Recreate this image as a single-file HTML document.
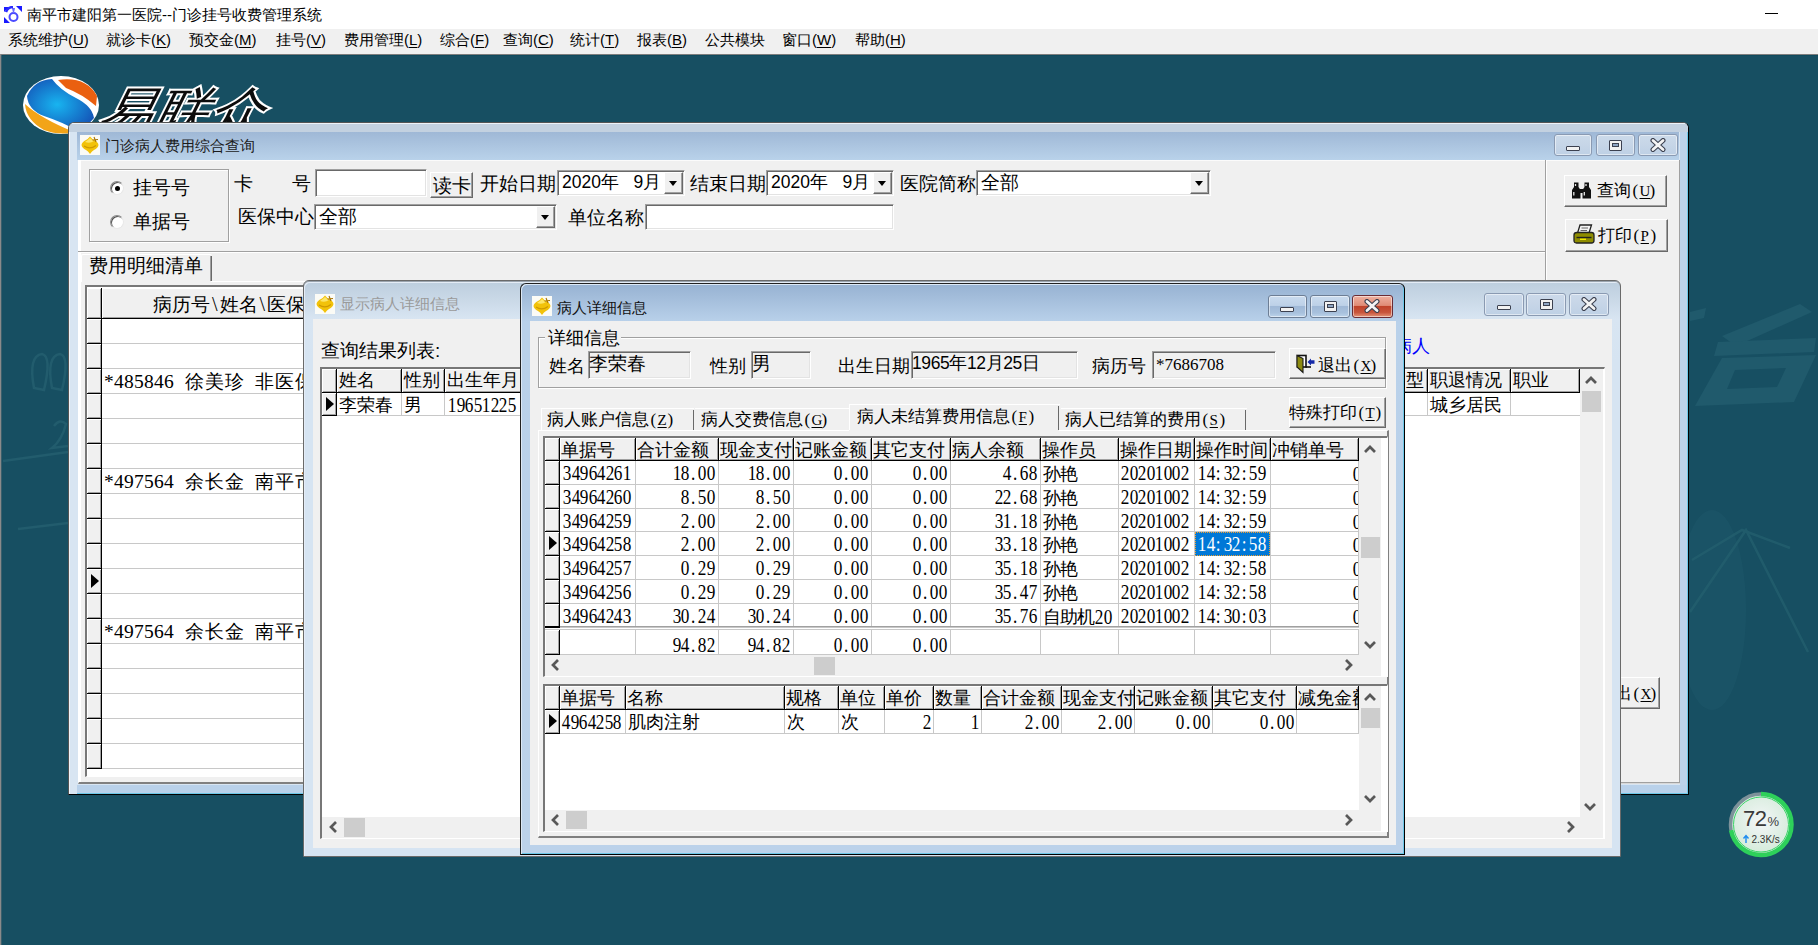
<!DOCTYPE html><html><head><meta charset="utf-8"><style>
*{margin:0;padding:0}
html,body{width:1818px;height:945px;overflow:hidden;background:#fff;position:relative}
div{position:absolute;box-sizing:border-box}
.t{white-space:nowrap;line-height:1;font-family:'Liberation Sans',sans-serif}
u{text-decoration:underline;text-underline-offset:2px;text-decoration-thickness:1px}
.m i{display:inline-block;font-style:normal;text-align:center}
.h{display:inline-block;font-style:normal;text-align:center;font-family:'Liberation Serif',serif}
.ga{font-family:'Liberation Serif',serif;font-size:20.5px}
.ga i{width:8.5px;transform:scaleX(.84)}
.ga i.w{width:17px;font-size:17.5px;transform:none;position:relative;top:-1px}
.g1{font-family:'Liberation Serif',serif;font-size:18.6px}
.g1 i{width:10px;transform:scaleX(1.05)}
.g1 i.w{width:20px;font-size:19px;transform:none}
</style></head><body><div style="left:0px;top:0px;width:1818px;height:29px;background:#fff"></div>
<svg style="position:absolute;left:4px;top:6px" width="18" height="17" viewBox="0 0 18 17"><rect width="18" height="17" fill="#fff"/><path d="M0 1 L5 1 L0 6 Z M18 0 L18 6 L12 0 Z M0 17 L6 17 L0 11 Z" fill="#1a1aff"/><circle cx="9.5" cy="11" r="4" fill="none" stroke="#4a4aff" stroke-width="2"/><path d="M8 2 L11 2 L10 7 L9 7 Z" fill="#6a6aff"/><path d="M2 6 Q4 1 9 1" stroke="#2a2aff" stroke-width="2.5" fill="none"/></svg>
<div class="t" style="left:27px;top:7px;font-size:15px;">南平市建阳第一医院--门诊挂号收费管理系统</div>
<div style="left:1765px;top:13px;width:13px;height:1px;background:#000"></div>
<div style="left:0px;top:29px;width:1818px;height:25px;background:#f0f0f0"></div>
<div class="t" style="left:8px;top:32px;font-size:15px;">系统维护(<u>U</u>)</div>
<div class="t" style="left:106px;top:32px;font-size:15px;">就诊卡(<u>K</u>)</div>
<div class="t" style="left:189px;top:32px;font-size:15px;">预交金(<u>M</u>)</div>
<div class="t" style="left:276px;top:32px;font-size:15px;">挂号(<u>V</u>)</div>
<div class="t" style="left:344px;top:32px;font-size:15px;">费用管理(<u>L</u>)</div>
<div class="t" style="left:440px;top:32px;font-size:15px;">综合(<u>F</u>)</div>
<div class="t" style="left:503px;top:32px;font-size:15px;">查询(<u>C</u>)</div>
<div class="t" style="left:570px;top:32px;font-size:15px;">统计(<u>T</u>)</div>
<div class="t" style="left:637px;top:32px;font-size:15px;">报表(<u>B</u>)</div>
<div class="t" style="left:705px;top:32px;font-size:15px;">公共模块</div>
<div class="t" style="left:782px;top:32px;font-size:15px;">窗口(<u>W</u>)</div>
<div class="t" style="left:855px;top:32px;font-size:15px;">帮助(<u>H</u>)</div>
<div style="left:0px;top:54px;width:1818px;height:891px;background:#174f62"></div>
<div style="left:0px;top:54px;width:1818px;height:1px;background:#7d7d7d"></div>
<div style="left:0px;top:55px;width:1818px;height:1px;background:#0f4a5d"></div>
<div style="left:0px;top:54px;width:1px;height:891px;background:#8a8a8a"></div>
<div style="left:1px;top:55px;width:1px;height:890px;background:#3a5f6c"></div>
<svg style="position:absolute;left:0;top:0" width="1818" height="945" viewBox="0 0 1818 945"><g fill="#205a6c"><path d="M1722 336 L1800 304 L1812 312 L1736 346 Z"/><path d="M1718 342 L1816 338 L1814 352 L1714 356 Z"/><path fill-rule="evenodd" d="M1722 358 L1816 355 L1794 402 L1695 406 Z M1735 370 L1786 368 L1777 387 L1727 389 Z"/><path d="M1690 312 L1706 308 L1704 318 L1690 321 Z"/></g><ellipse cx="1712" cy="610" rx="34" ry="100" fill="#1c5568" opacity=".7"/><g fill="none" stroke="#24606f" stroke-width="2.5" opacity=".75"><path d="M1690 612 L1746 530 L1808 652"/><path d="M1692 560 L1742 530 L1790 548"/></g><g fill="none" stroke="#225c6d" stroke-width="2.5"><path d="M3 461 L68 452 M18 529 L68 523"/><path d="M34 388 Q28 356 42 354 Q52 356 44 390 Z M52 388 Q46 356 60 354 Q70 356 62 390 Z"/><path d="M54 426 Q60 418 66 424 Q62 440 52 448 L68 446"/></g></svg>
<svg style="position:absolute;left:20px;top:74px" width="262" height="62" viewBox="0 0 262 62"><defs><radialGradient id="lg" cx="0.45" cy="0.5" r="0.6"><stop offset="0" stop-color="#18b4f0"/><stop offset="1" stop-color="#1456b8"/></radialGradient></defs><ellipse cx="41" cy="31" rx="38" ry="29" fill="#fff"/><path d="M7 22 Q14 6 32 5 Q40 16 56 24 Q72 32 74 44 Q66 54 56 56 Q42 48 24 42 Q8 36 7 22 Z" fill="url(#lg)"/><path d="M38 6 Q66 2 77 22 L76 32 Q62 20 46 14 Z" fill="#ea6010"/><path d="M5 30 Q20 44 54 58 Q40 62 24 56 Q6 46 5 30 Z" fill="#f2a418"/><g font-family="Liberation Sans,sans-serif" font-size="54" font-weight="500" font-style="italic"><text x="89" y="57" fill="#0c0c0c" stroke="#fff" stroke-width="4" paint-order="stroke" transform="skewX(-14)" letter-spacing="2" textLength="166">易联众</text></g></svg>
<div style="left:68px;top:122px;width:1621px;height:673px;background:#d8e5f2;border-radius:6px 6px 0 0;border:1px solid #555;border-right-color:#000;border-bottom-color:#000;box-shadow:inset 1px 1px 0 #eef4fb"></div>
<div style="left:69px;top:123px;width:1619px;height:9px;background:linear-gradient(#eef3f8 0,#eef3f8 1px,#c3d1e0 1px,#c3d1e0 100%);border-radius:5px 5px 0 0"></div>
<div style="left:77px;top:132px;width:1602px;height:28px;background:linear-gradient(#9fb8d6,#b9d2ea)"></div>
<div style="left:1680px;top:132px;width:8px;height:662px;background:#bcd2ea"></div>
<div style="left:77px;top:785px;width:1611px;height:9px;background:#b9d1ea"></div>
<div style="left:1687px;top:132px;width:1px;height:662px;background:#6cc8e8"></div>
<div style="left:77px;top:793px;width:1611px;height:1px;background:#6cc8e8"></div>
<svg style="position:absolute;left:80px;top:135px" width="20" height="20" viewBox="0 0 20 20"><rect width="20" height="20" fill="#fbfbf6"/><path d="M10 1.5 Q12 4 14 5 Q18 7 18.5 10 Q18 13 14 15 Q12 16 10 19 Q8 16 6 15 Q2 13 1.5 10 Q2 7 6 5 Q8 4 10 1.5 Z" fill="#f2c20a"/><path d="M10 3 Q12 5 14 6 Q10 9 5 7 Q8 5 10 3 Z" fill="#fde66a"/><path d="M4 11 Q10 15 16 10.5" stroke="#d09a00" stroke-width="1.3" fill="none"/><path d="M14 2 L16 7 M12.5 5 L18 4.5" stroke="#a87400" stroke-width="1.1"/></svg>
<div class="t" style="left:105px;top:138px;font-size:15px;color:#1b1b1b;">门诊病人费用综合查询</div>
<div style="left:1554px;top:134px;width:38px;height:22px;background:linear-gradient(#ccdaea 0%,#c6d5e7 50%,#bed0e5 100%);border:1px solid #8a9ab2;border-radius:3px;box-shadow:inset 0 0 0 1px rgba(255,255,255,.5)"></div>
<div style="left:1566px;top:146px;width:14px;height:5px;background:#f2f2f2;border:1px solid #3c4150;border-radius:1px"></div>
<div style="left:1596px;top:134px;width:39px;height:22px;background:linear-gradient(#ccdaea 0%,#c6d5e7 50%,#bed0e5 100%);border:1px solid #8a9ab2;border-radius:3px;box-shadow:inset 0 0 0 1px rgba(255,255,255,.5)"></div>
<div style="left:1609px;top:140px;width:13px;height:11px;background:#f2f2f2;border:1px solid #3c4150;border-radius:1px"></div>
<div style="left:1612px;top:143px;width:7px;height:4px;background:#8fa6c4;border:1px solid #3c4150"></div>
<div style="left:1638px;top:134px;width:40px;height:22px;background:linear-gradient(#ccdaea 0%,#c6d5e7 50%,#bed0e5 100%);border:1px solid #8a9ab2;border-radius:3px;box-shadow:inset 0 0 0 1px rgba(255,255,255,.5)"></div>
<svg style="position:absolute;left:1650px;top:138px" width="16" height="14" viewBox="0 0 16 14"><path d="M3 2.5 L13 11.5 M13 2.5 L3 11.5" stroke="#3c4150" stroke-width="5" stroke-linecap="round"/><path d="M3 2.5 L13 11.5 M13 2.5 L3 11.5" stroke="#f4f4f4" stroke-width="2.8" stroke-linecap="round"/></svg>
<div style="left:78px;top:160px;width:1602px;height:624px;background:#f0f0f0"></div>
<div style="left:78px;top:160px;width:1602px;height:1px;background:#fbfbfb"></div>
<div style="left:1679px;top:160px;width:1px;height:624px;background:#a0a0a0"></div>
<div style="left:78px;top:782px;width:1602px;height:1px;background:#a0a0a0"></div>
<div style="left:78px;top:783px;width:1602px;height:1px;background:#d8d8d8"></div>
<div style="left:78px;top:160px;width:1px;height:624px;background:#fff"></div>
<div style="left:79px;top:160px;width:1px;height:624px;background:#fff"></div>
<div style="left:80px;top:160px;width:1px;height:624px;background:#fff"></div>
<div style="left:89px;top:169px;width:140px;height:73px;border:1px solid #a0a0a0;box-shadow:1px 1px 0 #fff,inset 1px 1px 0 #fff"></div>
<div style="left:110px;top:181px;width:14px;height:14px;border-radius:50%;background:#fff;border:1px solid;border-color:#8a8a8a #e8e8e8 #e8e8e8 #8a8a8a;box-shadow:inset 1px 1px 0 #505050"></div>
<div style="left:115px;top:186px;width:5px;height:5px;border-radius:50%;background:#000"></div>
<div class="t" style="left:133px;top:178px;font-size:19px;">挂号号</div>
<div style="left:110px;top:215px;width:14px;height:14px;border-radius:50%;background:#fff;border:1px solid;border-color:#8a8a8a #e8e8e8 #e8e8e8 #8a8a8a;box-shadow:inset 1px 1px 0 #505050"></div>
<div class="t" style="left:133px;top:212px;font-size:19px;">单据号</div>
<div class="t" style="left:234px;top:174px;font-size:19px;">卡</div>
<div class="t" style="left:292px;top:174px;font-size:19px;">号</div>
<div class="t" style="left:238px;top:208px;font-size:18.5px;">医保中心</div>
<div style="left:315px;top:169px;width:112px;height:28px;background:#fff;border:1px solid;border-color:#a0a0a0 #fff #fff #a0a0a0;box-shadow:inset 1px 1px 0 #696969,inset -1px -1px 0 #e3e3e3"></div>
<div style="left:430px;top:172px;width:43px;height:26px;background:#f0f0f0;border:1px solid;border-color:#fff #696969 #696969 #fff;box-shadow:inset -1px -1px 0 #a0a0a0"></div>
<div class="t" style="left:433px;top:176px;font-size:19px;">读卡</div>
<div class="t" style="left:480px;top:175px;font-size:18.5px;">开始日期</div>
<div style="left:557px;top:170px;width:128px;height:26px;background:#fff;border:1px solid;border-color:#a0a0a0 #fff #fff #a0a0a0;box-shadow:inset 1px 1px 0 #696969,inset -1px -1px 0 #e3e3e3"></div>
<div style="left:664px;top:172px;width:19px;height:22px;background:#f0f0f0;border:1px solid;border-color:#fff #696969 #696969 #fff;box-shadow:inset -1px -1px 0 #a0a0a0"></div>
<div style="left:669px;top:181px;width:0;height:0;border-left:4px solid transparent;border-right:4px solid transparent;border-top:5px solid #000"></div>
<div class="t" style="left:562px;top:174px;font-size:17.5px;">2020年&nbsp;&nbsp;&nbsp;9月</div>
<div class="t" style="left:690px;top:175px;font-size:18.5px;">结束日期</div>
<div style="left:766px;top:170px;width:128px;height:26px;background:#fff;border:1px solid;border-color:#a0a0a0 #fff #fff #a0a0a0;box-shadow:inset 1px 1px 0 #696969,inset -1px -1px 0 #e3e3e3"></div>
<div style="left:873px;top:172px;width:19px;height:22px;background:#f0f0f0;border:1px solid;border-color:#fff #696969 #696969 #fff;box-shadow:inset -1px -1px 0 #a0a0a0"></div>
<div style="left:878px;top:181px;width:0;height:0;border-left:4px solid transparent;border-right:4px solid transparent;border-top:5px solid #000"></div>
<div style="left:768px;top:172px;width:101px;height:22px;overflow:hidden"><div class="t" style="left:3px;top:2px;font-size:17.5px">2020年&nbsp;&nbsp;&nbsp;9月1日</div></div>
<div class="t" style="left:900px;top:175px;font-size:18.5px;">医院简称</div>
<div style="left:976px;top:170px;width:235px;height:26px;background:#fff;border:1px solid;border-color:#a0a0a0 #fff #fff #a0a0a0;box-shadow:inset 1px 1px 0 #696969,inset -1px -1px 0 #e3e3e3"></div>
<div style="left:1190px;top:172px;width:19px;height:22px;background:#f0f0f0;border:1px solid;border-color:#fff #696969 #696969 #fff;box-shadow:inset -1px -1px 0 #a0a0a0"></div>
<div style="left:1195px;top:181px;width:0;height:0;border-left:4px solid transparent;border-right:4px solid transparent;border-top:5px solid #000"></div>
<div class="t" style="left:981px;top:173px;font-size:19px;">全部</div>
<div style="left:314px;top:204px;width:243px;height:26px;background:#fff;border:1px solid;border-color:#a0a0a0 #fff #fff #a0a0a0;box-shadow:inset 1px 1px 0 #696969,inset -1px -1px 0 #e3e3e3"></div>
<div style="left:536px;top:206px;width:19px;height:22px;background:#f0f0f0;border:1px solid;border-color:#fff #696969 #696969 #fff;box-shadow:inset -1px -1px 0 #a0a0a0"></div>
<div style="left:541px;top:215px;width:0;height:0;border-left:4px solid transparent;border-right:4px solid transparent;border-top:5px solid #000"></div>
<div class="t" style="left:319px;top:207px;font-size:19px;">全部</div>
<div class="t" style="left:568px;top:209px;font-size:18.5px;">单位名称</div>
<div style="left:645px;top:204px;width:249px;height:26px;background:#fff;border:1px solid;border-color:#a0a0a0 #fff #fff #a0a0a0;box-shadow:inset 1px 1px 0 #696969,inset -1px -1px 0 #e3e3e3"></div>
<div style="left:78px;top:251px;width:1467px;height:1px;background:#a0a0a0"></div>
<div style="left:78px;top:252px;width:1467px;height:1px;background:#fff"></div>
<div style="left:1545px;top:160px;width:1px;height:624px;background:#a0a0a0"></div>
<div style="left:1546px;top:160px;width:1px;height:624px;background:#fff"></div>
<div style="left:1564px;top:175px;width:103px;height:32px;background:#f0f0f0;border:1px solid;border-color:#fff #696969 #696969 #fff;box-shadow:inset -1px -1px 0 #a0a0a0"></div>
<svg style="position:absolute;left:1572px;top:182px" width="20" height="17" viewBox="0 0 20 17"><path d="M2 0.5 L6.5 0.5 L6.5 5 L8.5 8 L8.5 16.5 L0 16.5 L0 8 L2 5 Z M12.5 0.5 L17 0.5 L17 5 L19 8 L19 16.5 L10.5 16.5 L10.5 8 L12.5 5 Z M8 7 L11 7 L11 11 L8 11 Z" fill="#111"/><path d="M1.8 10 L1.8 13.5 M12.3 10 L12.3 13.5 M3.5 2 L3.5 4 M14 2 L14 4" stroke="#e8e8e8" stroke-width="1.3"/></svg>
<div class="t" style="left:1597px;top:182px;font-size:17px;">查询<i class="h" style="width:8.5px">(</i><i class="h" style="width:8.5px"><u style="font-size:15px">U</u></i><i class="h" style="width:8.5px">)</i></div>
<div style="left:1565px;top:219px;width:103px;height:33px;background:#f0f0f0;border:1px solid;border-color:#fff #696969 #696969 #fff;box-shadow:inset -1px -1px 0 #a0a0a0"></div>
<svg style="position:absolute;left:1573px;top:224px" width="22" height="20" viewBox="0 0 22 20"><path d="M7 1 L18.5 1 L16 9 L4.5 9 Z" fill="#f4f4f4" stroke="#222" stroke-width="1.3"/><path d="M8.5 4 L15 4 M7.5 6.5 L14 6.5" stroke="#555" stroke-width="0.9"/><path d="M1 11 Q1 8.5 4 8.5 L18.5 8.5 Q21 8.5 21 11 L21 16.5 Q21 19 18.5 19 L3.5 19 Q1 19 1 16.5 Z" fill="#8e8c00" stroke="#222" stroke-width="1.3"/><path d="M3.5 13.5 L18.5 13.5" stroke="#222" stroke-width="1.4"/><path d="M7 15.3 L13 15.3" stroke="#f2ea00" stroke-width="1.4"/></svg>
<div class="t" style="left:1598px;top:227px;font-size:17px;">打印<i class="h" style="width:8.5px">(</i><i class="h" style="width:8.5px"><u style="font-size:15px">P</u></i><i class="h" style="width:8.5px">)</i></div>
<div style="left:1557px;top:677px;width:103px;height:32px;background:#f0f0f0;border:1px solid;border-color:#fff #696969 #696969 #fff;box-shadow:inset -1px -1px 0 #a0a0a0"></div>
<div class="t" style="left:1598px;top:685px;font-size:17px;">退出<i class="h" style="width:8.5px">(</i><i class="h" style="width:8.5px"><u style="font-size:15px">X</u></i><i class="h" style="width:8.5px">)</i></div>
<div style="left:81px;top:254px;width:131px;height:28px;background:#f0f0f0;border-left:1px solid #fff;border-top:1px solid #fff;border-radius:2px 2px 0 0"></div>
<div style="left:211px;top:256px;width:1px;height:26px;background:#696969"></div>
<div style="left:210px;top:256px;width:1px;height:26px;background:#a0a0a0"></div>
<div class="t" style="left:89px;top:256px;font-size:19px;">费用明细清单</div>
<div style="left:78px;top:281px;width:1470px;height:503px;border-left:1px solid #fff;border-top:1px solid #fff;border-bottom:2px solid #808080"></div>
<div style="left:82px;top:281px;width:129px;height:1px;background:#f0f0f0"></div>
<div style="left:85px;top:285px;width:1470px;height:492px;background:#fff;border-left:2px solid #777;border-top:2px solid #777;border-bottom:1px solid #fff"></div>
<div style="left:87px;top:288px;width:14px;height:30px;background:#f0f0f0;box-shadow:inset 1px 1px 0 #fff,inset -1px -1px 0 #a0a0a0"></div>
<div style="left:101px;top:288px;width:1px;height:31px;background:#000"></div>
<div style="left:87px;top:318px;width:15px;height:1px;background:#000"></div>
<div style="left:102px;top:288px;width:1358px;height:30px;background:#f0f0f0;box-shadow:inset 1px 1px 0 #fff,inset -1px -1px 0 #a0a0a0"></div>
<div style="left:1460px;top:288px;width:1px;height:31px;background:#000"></div>
<div style="left:102px;top:318px;width:1359px;height:1px;background:#000"></div>
<div class="t" style="left:153px;top:294px;font-size:19px">病历号<i class="h" style="width:9.5px;font-size:20px">\</i>姓名<i class="h" style="width:9.5px;font-size:20px">\</i>医保</div>
<div style="left:87px;top:319px;width:14px;height:24px;background:#f0f0f0;box-shadow:inset 1px 1px 0 #fff,inset -1px -1px 0 #a0a0a0"></div>
<div style="left:101px;top:319px;width:1px;height:25px;background:#000"></div>
<div style="left:87px;top:343px;width:15px;height:1px;background:#000"></div>
<div style="left:102px;top:343px;width:1400px;height:1px;background:#c8c8c8"></div>
<div style="left:87px;top:344px;width:14px;height:24px;background:#f0f0f0;box-shadow:inset 1px 1px 0 #fff,inset -1px -1px 0 #a0a0a0"></div>
<div style="left:101px;top:344px;width:1px;height:25px;background:#000"></div>
<div style="left:87px;top:368px;width:15px;height:1px;background:#000"></div>
<div style="left:102px;top:368px;width:1400px;height:1px;background:#c8c8c8"></div>
<div style="left:87px;top:369px;width:14px;height:24px;background:#f0f0f0;box-shadow:inset 1px 1px 0 #fff,inset -1px -1px 0 #a0a0a0"></div>
<div style="left:101px;top:369px;width:1px;height:25px;background:#000"></div>
<div style="left:87px;top:393px;width:15px;height:1px;background:#000"></div>
<div style="left:102px;top:393px;width:1400px;height:1px;background:#c8c8c8"></div>
<div style="left:87px;top:394px;width:14px;height:24px;background:#f0f0f0;box-shadow:inset 1px 1px 0 #fff,inset -1px -1px 0 #a0a0a0"></div>
<div style="left:101px;top:394px;width:1px;height:25px;background:#000"></div>
<div style="left:87px;top:418px;width:15px;height:1px;background:#000"></div>
<div style="left:102px;top:418px;width:1400px;height:1px;background:#c8c8c8"></div>
<div style="left:87px;top:419px;width:14px;height:24px;background:#f0f0f0;box-shadow:inset 1px 1px 0 #fff,inset -1px -1px 0 #a0a0a0"></div>
<div style="left:101px;top:419px;width:1px;height:25px;background:#000"></div>
<div style="left:87px;top:443px;width:15px;height:1px;background:#000"></div>
<div style="left:102px;top:443px;width:1400px;height:1px;background:#c8c8c8"></div>
<div style="left:87px;top:444px;width:14px;height:24px;background:#f0f0f0;box-shadow:inset 1px 1px 0 #fff,inset -1px -1px 0 #a0a0a0"></div>
<div style="left:101px;top:444px;width:1px;height:25px;background:#000"></div>
<div style="left:87px;top:468px;width:15px;height:1px;background:#000"></div>
<div style="left:102px;top:468px;width:1400px;height:1px;background:#c8c8c8"></div>
<div style="left:87px;top:469px;width:14px;height:24px;background:#f0f0f0;box-shadow:inset 1px 1px 0 #fff,inset -1px -1px 0 #a0a0a0"></div>
<div style="left:101px;top:469px;width:1px;height:25px;background:#000"></div>
<div style="left:87px;top:493px;width:15px;height:1px;background:#000"></div>
<div style="left:102px;top:493px;width:1400px;height:1px;background:#c8c8c8"></div>
<div style="left:87px;top:494px;width:14px;height:24px;background:#f0f0f0;box-shadow:inset 1px 1px 0 #fff,inset -1px -1px 0 #a0a0a0"></div>
<div style="left:101px;top:494px;width:1px;height:25px;background:#000"></div>
<div style="left:87px;top:518px;width:15px;height:1px;background:#000"></div>
<div style="left:102px;top:518px;width:1400px;height:1px;background:#c8c8c8"></div>
<div style="left:87px;top:519px;width:14px;height:24px;background:#f0f0f0;box-shadow:inset 1px 1px 0 #fff,inset -1px -1px 0 #a0a0a0"></div>
<div style="left:101px;top:519px;width:1px;height:25px;background:#000"></div>
<div style="left:87px;top:543px;width:15px;height:1px;background:#000"></div>
<div style="left:102px;top:543px;width:1400px;height:1px;background:#c8c8c8"></div>
<div style="left:87px;top:544px;width:14px;height:24px;background:#f0f0f0;box-shadow:inset 1px 1px 0 #fff,inset -1px -1px 0 #a0a0a0"></div>
<div style="left:101px;top:544px;width:1px;height:25px;background:#000"></div>
<div style="left:87px;top:568px;width:15px;height:1px;background:#000"></div>
<div style="left:102px;top:568px;width:1400px;height:1px;background:#c8c8c8"></div>
<div style="left:87px;top:569px;width:14px;height:24px;background:#f0f0f0;box-shadow:inset 1px 1px 0 #fff,inset -1px -1px 0 #a0a0a0"></div>
<div style="left:101px;top:569px;width:1px;height:25px;background:#000"></div>
<div style="left:87px;top:593px;width:15px;height:1px;background:#000"></div>
<div style="left:91px;top:574px;width:0;height:0;border-top:7px solid transparent;border-bottom:7px solid transparent;border-left:8px solid #000"></div>
<div style="left:102px;top:593px;width:1400px;height:1px;background:#c8c8c8"></div>
<div style="left:87px;top:594px;width:14px;height:24px;background:#f0f0f0;box-shadow:inset 1px 1px 0 #fff,inset -1px -1px 0 #a0a0a0"></div>
<div style="left:101px;top:594px;width:1px;height:25px;background:#000"></div>
<div style="left:87px;top:618px;width:15px;height:1px;background:#000"></div>
<div style="left:102px;top:618px;width:1400px;height:1px;background:#c8c8c8"></div>
<div style="left:87px;top:619px;width:14px;height:24px;background:#f0f0f0;box-shadow:inset 1px 1px 0 #fff,inset -1px -1px 0 #a0a0a0"></div>
<div style="left:101px;top:619px;width:1px;height:25px;background:#000"></div>
<div style="left:87px;top:643px;width:15px;height:1px;background:#000"></div>
<div style="left:102px;top:643px;width:1400px;height:1px;background:#c8c8c8"></div>
<div style="left:87px;top:644px;width:14px;height:24px;background:#f0f0f0;box-shadow:inset 1px 1px 0 #fff,inset -1px -1px 0 #a0a0a0"></div>
<div style="left:101px;top:644px;width:1px;height:25px;background:#000"></div>
<div style="left:87px;top:668px;width:15px;height:1px;background:#000"></div>
<div style="left:102px;top:668px;width:1400px;height:1px;background:#c8c8c8"></div>
<div style="left:87px;top:669px;width:14px;height:24px;background:#f0f0f0;box-shadow:inset 1px 1px 0 #fff,inset -1px -1px 0 #a0a0a0"></div>
<div style="left:101px;top:669px;width:1px;height:25px;background:#000"></div>
<div style="left:87px;top:693px;width:15px;height:1px;background:#000"></div>
<div style="left:102px;top:693px;width:1400px;height:1px;background:#c8c8c8"></div>
<div style="left:87px;top:694px;width:14px;height:24px;background:#f0f0f0;box-shadow:inset 1px 1px 0 #fff,inset -1px -1px 0 #a0a0a0"></div>
<div style="left:101px;top:694px;width:1px;height:25px;background:#000"></div>
<div style="left:87px;top:718px;width:15px;height:1px;background:#000"></div>
<div style="left:102px;top:718px;width:1400px;height:1px;background:#c8c8c8"></div>
<div style="left:87px;top:719px;width:14px;height:24px;background:#f0f0f0;box-shadow:inset 1px 1px 0 #fff,inset -1px -1px 0 #a0a0a0"></div>
<div style="left:101px;top:719px;width:1px;height:25px;background:#000"></div>
<div style="left:87px;top:743px;width:15px;height:1px;background:#000"></div>
<div style="left:102px;top:743px;width:1400px;height:1px;background:#c8c8c8"></div>
<div style="left:87px;top:744px;width:14px;height:24px;background:#f0f0f0;box-shadow:inset 1px 1px 0 #fff,inset -1px -1px 0 #a0a0a0"></div>
<div style="left:101px;top:744px;width:1px;height:25px;background:#000"></div>
<div style="left:87px;top:768px;width:15px;height:1px;background:#000"></div>
<div style="left:102px;top:768px;width:1400px;height:1px;background:#c8c8c8"></div>
<div class="t m g1" style="left:104px;top:372px;"><i>*</i><i>4</i><i>8</i><i>5</i><i>8</i><i>4</i><i>6</i><i>&nbsp;</i><i class="w">徐</i><i class="w">美</i><i class="w">珍</i><i>&nbsp;</i><i class="w">非</i><i class="w">医</i><i class="w">保</i></div>
<div class="t m g1" style="left:104px;top:472px;"><i>*</i><i>4</i><i>9</i><i>7</i><i>5</i><i>6</i><i>4</i><i>&nbsp;</i><i class="w">余</i><i class="w">长</i><i class="w">金</i><i>&nbsp;</i><i class="w">南</i><i class="w">平</i><i class="w">市</i></div>
<div class="t m g1" style="left:104px;top:622px;"><i>*</i><i>4</i><i>9</i><i>7</i><i>5</i><i>6</i><i>4</i><i>&nbsp;</i><i class="w">余</i><i class="w">长</i><i class="w">金</i><i>&nbsp;</i><i class="w">南</i><i class="w">平</i><i class="w">市</i></div>
<div style="left:303px;top:280px;width:1318px;height:577px;background:linear-gradient(#bccddd 0,#d8e5f2 38px,#d6e4f2 80px,#d6e4f2 100%);border-radius:6px 6px 0 0;border:1px solid #6a6a6a;box-shadow:inset 0 1px 0 #9aa4ae,inset 1px 2px 0 #e4ecf6"></div>
<svg style="position:absolute;left:315px;top:294px" width="20" height="20" viewBox="0 0 20 20"><rect width="20" height="20" fill="#fbfbf6"/><path d="M10 1.5 Q12 4 14 5 Q18 7 18.5 10 Q18 13 14 15 Q12 16 10 19 Q8 16 6 15 Q2 13 1.5 10 Q2 7 6 5 Q8 4 10 1.5 Z" fill="#f2c20a"/><path d="M10 3 Q12 5 14 6 Q10 9 5 7 Q8 5 10 3 Z" fill="#fde66a"/><path d="M4 11 Q10 15 16 10.5" stroke="#d09a00" stroke-width="1.3" fill="none"/><path d="M14 2 L16 7 M12.5 5 L18 4.5" stroke="#a87400" stroke-width="1.1"/></svg>
<div class="t" style="left:340px;top:296px;font-size:15px;color:#9a9a9a;">显示病人详细信息</div>
<div style="left:1484px;top:293px;width:40px;height:23px;background:linear-gradient(#ccdaea 0%,#c6d5e7 50%,#bed0e5 100%);border:1px solid #8a9ab2;border-radius:3px;box-shadow:inset 0 0 0 1px rgba(255,255,255,.5)"></div>
<div style="left:1497px;top:305px;width:14px;height:5px;background:#f2f2f2;border:1px solid #3c4150;border-radius:1px"></div>
<div style="left:1526px;top:293px;width:40px;height:23px;background:linear-gradient(#ccdaea 0%,#c6d5e7 50%,#bed0e5 100%);border:1px solid #8a9ab2;border-radius:3px;box-shadow:inset 0 0 0 1px rgba(255,255,255,.5)"></div>
<div style="left:1540px;top:299px;width:13px;height:11px;background:#f2f2f2;border:1px solid #3c4150;border-radius:1px"></div>
<div style="left:1543px;top:302px;width:7px;height:4px;background:#8fa6c4;border:1px solid #3c4150"></div>
<div style="left:1569px;top:293px;width:40px;height:23px;background:linear-gradient(#ccdaea 0%,#c6d5e7 50%,#bed0e5 100%);border:1px solid #8a9ab2;border-radius:3px;box-shadow:inset 0 0 0 1px rgba(255,255,255,.5)"></div>
<svg style="position:absolute;left:1581px;top:297px" width="16" height="14" viewBox="0 0 16 14"><path d="M3 2.5 L13 11.5 M13 2.5 L3 11.5" stroke="#3c4150" stroke-width="5" stroke-linecap="round"/><path d="M3 2.5 L13 11.5 M13 2.5 L3 11.5" stroke="#f4f4f4" stroke-width="2.8" stroke-linecap="round"/></svg>
<div style="left:313px;top:319px;width:1299px;height:529px;background:#f0f0f0"></div>
<div class="t" style="left:321px;top:341px;font-size:19px;">查询结果列表:</div>
<div class="t" style="left:1394px;top:337px;font-size:18px;color:#0000ff;">病人</div>
<div style="left:320px;top:367px;width:1285px;height:472px;background:#fff;border-left:2px solid #777;border-top:2px solid #777;border-right:1px solid #fff;border-bottom:1px solid #fff"></div>
<div style="left:322px;top:369px;width:14px;height:23px;background:#f0f0f0;box-shadow:inset 1px 1px 0 #fff,inset -1px -1px 0 #a0a0a0"></div>
<div style="left:336px;top:369px;width:1px;height:24px;background:#000"></div>
<div style="left:322px;top:392px;width:15px;height:1px;background:#000"></div>
<div style="left:337px;top:369px;width:64px;height:23px;background:#f0f0f0;box-shadow:inset 1px 1px 0 #fff,inset -1px -1px 0 #a0a0a0"></div>
<div style="left:401px;top:369px;width:1px;height:24px;background:#000"></div>
<div style="left:337px;top:392px;width:65px;height:1px;background:#000"></div>
<div style="left:337px;top:369px;width:64px;height:23px;overflow:hidden"><div class="t" style="left:2px;top:2px;font-size:18px">姓名</div></div>
<div style="left:402px;top:369px;width:42px;height:23px;background:#f0f0f0;box-shadow:inset 1px 1px 0 #fff,inset -1px -1px 0 #a0a0a0"></div>
<div style="left:444px;top:369px;width:1px;height:24px;background:#000"></div>
<div style="left:402px;top:392px;width:43px;height:1px;background:#000"></div>
<div style="left:402px;top:369px;width:42px;height:23px;overflow:hidden"><div class="t" style="left:2px;top:2px;font-size:18px">性别</div></div>
<div style="left:445px;top:369px;width:115px;height:23px;background:#f0f0f0;box-shadow:inset 1px 1px 0 #fff,inset -1px -1px 0 #a0a0a0"></div>
<div style="left:560px;top:369px;width:1px;height:24px;background:#000"></div>
<div style="left:445px;top:392px;width:116px;height:1px;background:#000"></div>
<div style="left:445px;top:369px;width:115px;height:23px;overflow:hidden"><div class="t" style="left:2px;top:2px;font-size:18px">出生年月</div></div>
<div style="left:1300px;top:369px;width:127px;height:23px;background:#f0f0f0;box-shadow:inset 1px 1px 0 #fff,inset -1px -1px 0 #a0a0a0"></div>
<div style="left:1427px;top:369px;width:1px;height:24px;background:#000"></div>
<div style="left:1300px;top:392px;width:128px;height:1px;background:#000"></div>
<div style="left:1300px;top:369px;width:127px;height:23px;overflow:hidden"><div class="t" style="left:106px;top:2px;font-size:18px">型</div></div>
<div style="left:1428px;top:369px;width:82px;height:23px;background:#f0f0f0;box-shadow:inset 1px 1px 0 #fff,inset -1px -1px 0 #a0a0a0"></div>
<div style="left:1510px;top:369px;width:1px;height:24px;background:#000"></div>
<div style="left:1428px;top:392px;width:83px;height:1px;background:#000"></div>
<div style="left:1428px;top:369px;width:82px;height:23px;overflow:hidden"><div class="t" style="left:2px;top:2px;font-size:18px">职退情况</div></div>
<div style="left:1511px;top:369px;width:68px;height:23px;background:#f0f0f0;box-shadow:inset 1px 1px 0 #fff,inset -1px -1px 0 #a0a0a0"></div>
<div style="left:1579px;top:369px;width:1px;height:24px;background:#000"></div>
<div style="left:1511px;top:392px;width:69px;height:1px;background:#000"></div>
<div style="left:1511px;top:369px;width:68px;height:23px;overflow:hidden"><div class="t" style="left:2px;top:2px;font-size:18px">职业</div></div>
<div style="left:322px;top:393px;width:14px;height:22px;background:#f0f0f0;box-shadow:inset 1px 1px 0 #fff,inset -1px -1px 0 #a0a0a0"></div>
<div style="left:336px;top:393px;width:1px;height:23px;background:#000"></div>
<div style="left:322px;top:415px;width:15px;height:1px;background:#000"></div>
<div style="left:326px;top:397px;width:0;height:0;border-top:7px solid transparent;border-bottom:7px solid transparent;border-left:8px solid #000"></div>
<div style="left:401px;top:393px;width:1px;height:22px;background:#c8c8c8"></div>
<div style="left:444px;top:393px;width:1px;height:22px;background:#c8c8c8"></div>
<div style="left:1427px;top:393px;width:1px;height:22px;background:#c8c8c8"></div>
<div style="left:1510px;top:393px;width:1px;height:22px;background:#c8c8c8"></div>
<div style="left:337px;top:415px;width:1243px;height:1px;background:#c8c8c8"></div>
<div class="t" style="left:339px;top:396px;font-size:18px;">李荣春</div>
<div class="t" style="left:404px;top:396px;font-size:18px;">男</div>
<div class="t m ga" style="left:447px;top:395px;letter-spacing:0.5px"><i>1</i><i>9</i><i>6</i><i>5</i><i>1</i><i>2</i><i>2</i><i>5</i></div>
<div class="t" style="left:1430px;top:396px;font-size:18px;">城乡居民</div>
<div style="left:1580px;top:369px;width:23px;height:448px;background:#f0f0f0"></div>
<svg style="position:absolute;left:1585px;top:376px" width="12" height="9" viewBox="0 0 12 9"><path d="M1 7 L6 2 L11 7" stroke="#585858" stroke-width="2.7" fill="none"/></svg>
<div style="left:1582px;top:391px;width:19px;height:21px;background:#cdcdcd"></div>
<svg style="position:absolute;left:1584px;top:802px" width="12" height="9" viewBox="0 0 12 9"><path d="M1 2 L6 7 L11 2" stroke="#585858" stroke-width="2.7" fill="none"/></svg>
<div style="left:322px;top:817px;width:1281px;height:21px;background:#f0f0f0"></div>
<svg style="position:absolute;left:329px;top:821px" width="9" height="12" viewBox="0 0 9 12"><path d="M7 1 L2 6 L7 11" stroke="#585858" stroke-width="2.7" fill="none"/></svg>
<div style="left:344px;top:818px;width:21px;height:19px;background:#cdcdcd"></div>
<svg style="position:absolute;left:1566px;top:821px" width="9" height="12" viewBox="0 0 9 12"><path d="M2 1 L7 6 L2 11" stroke="#585858" stroke-width="2.7" fill="none"/></svg>
<div style="left:520px;top:283px;width:885px;height:572px;background:linear-gradient(#97b2d2 0,#b9d1ea 38px,#bcd2ea 100%);border-radius:6px 6px 0 0;border:1px solid #222;border-right-color:#000;border-bottom-color:#000;box-shadow:inset 1px 1px 0 #dce8f5,inset -1px -1px 0 #6cc8e8"></div>
<svg style="position:absolute;left:532px;top:296px" width="20" height="20" viewBox="0 0 20 20"><rect width="20" height="20" fill="#fbfbf6"/><path d="M10 1.5 Q12 4 14 5 Q18 7 18.5 10 Q18 13 14 15 Q12 16 10 19 Q8 16 6 15 Q2 13 1.5 10 Q2 7 6 5 Q8 4 10 1.5 Z" fill="#f2c20a"/><path d="M10 3 Q12 5 14 6 Q10 9 5 7 Q8 5 10 3 Z" fill="#fde66a"/><path d="M4 11 Q10 15 16 10.5" stroke="#d09a00" stroke-width="1.3" fill="none"/><path d="M14 2 L16 7 M12.5 5 L18 4.5" stroke="#a87400" stroke-width="1.1"/></svg>
<div class="t" style="left:557px;top:300px;font-size:15px;color:#111;">病人详细信息</div>
<div style="left:1268px;top:295px;width:39px;height:23px;background:linear-gradient(#cadbee 0%,#bdd1e8 45%,#a0b9d7 50%,#a8c1dd 80%,#bcd3ea 100%);border:1px solid #6d7e95;border-radius:3px;box-shadow:inset 0 0 0 1px rgba(255,255,255,.5)"></div>
<div style="left:1280px;top:307px;width:14px;height:5px;background:#f2f2f2;border:1px solid #3c4150;border-radius:1px"></div>
<div style="left:1310px;top:295px;width:40px;height:23px;background:linear-gradient(#cadbee 0%,#bdd1e8 45%,#a0b9d7 50%,#a8c1dd 80%,#bcd3ea 100%);border:1px solid #6d7e95;border-radius:3px;box-shadow:inset 0 0 0 1px rgba(255,255,255,.5)"></div>
<div style="left:1324px;top:301px;width:13px;height:11px;background:#f2f2f2;border:1px solid #3c4150;border-radius:1px"></div>
<div style="left:1327px;top:304px;width:7px;height:4px;background:#8fa6c4;border:1px solid #3c4150"></div>
<div style="left:1352px;top:295px;width:41px;height:23px;background:linear-gradient(#eeb0a0 0%,#e08c76 45%,#c0432a 50%,#c8553c 78%,#e49478 100%);border:1px solid #6b2c35;border-radius:3px;box-shadow:inset 0 0 0 1px rgba(255,255,255,.5)"></div>
<svg style="position:absolute;left:1364px;top:299px" width="16" height="14" viewBox="0 0 16 14"><path d="M3 2.5 L13 11.5 M13 2.5 L3 11.5" stroke="#3c4150" stroke-width="5" stroke-linecap="round"/><path d="M3 2.5 L13 11.5 M13 2.5 L3 11.5" stroke="#f4f4f4" stroke-width="2.8" stroke-linecap="round"/></svg>
<div style="left:530px;top:321px;width:866px;height:524px;background:#f0f0f0"></div>
<div style="left:538px;top:337px;width:848px;height:51px;border:1px solid #a0a0a0;box-shadow:1px 1px 0 #fff,inset 1px 1px 0 #fff"></div>
<div style="left:545px;top:328px;width:76px;height:20px;background:#f0f0f0"></div>
<div class="t" style="left:548px;top:329px;font-size:18px;">详细信息</div>
<div class="t" style="left:549px;top:357px;font-size:18px;">姓名</div>
<div style="left:588px;top:351px;width:103px;height:28px;background:#f0f0f0;border:1px solid;border-color:#a0a0a0 #fff #fff #a0a0a0;box-shadow:inset 1px 1px 0 #696969,inset -1px -1px 0 #e3e3e3"></div>
<div class="t" style="left:589px;top:354px;font-size:19px;">李荣春</div>
<div class="t" style="left:710px;top:357px;font-size:18px;">性别</div>
<div style="left:751px;top:351px;width:60px;height:28px;background:#f0f0f0;border:1px solid;border-color:#a0a0a0 #fff #fff #a0a0a0;box-shadow:inset 1px 1px 0 #696969,inset -1px -1px 0 #e3e3e3"></div>
<div class="t" style="left:752px;top:354px;font-size:19px;">男</div>
<div class="t" style="left:838px;top:357px;font-size:18px;">出生日期</div>
<div style="left:911px;top:351px;width:167px;height:28px;background:#f0f0f0;border:1px solid;border-color:#a0a0a0 #fff #fff #a0a0a0;box-shadow:inset 1px 1px 0 #696969,inset -1px -1px 0 #e3e3e3"></div>
<div class="t" style="left:912px;top:355px;font-size:17.5px;letter-spacing:-0.4px">1965年12月25日</div>
<div class="t" style="left:1092px;top:357px;font-size:18px;">病历号</div>
<div style="left:1152px;top:351px;width:124px;height:28px;background:#f0f0f0;border:1px solid;border-color:#a0a0a0 #fff #fff #a0a0a0;box-shadow:inset 1px 1px 0 #696969,inset -1px -1px 0 #e3e3e3"></div>
<div class="t" style="left:1156px;top:356px;font-size:17px;font-family:'Liberation Serif',serif;">*7686708</div>
<div style="left:1289px;top:348px;width:97px;height:31px;background:#f0f0f0;border:1px solid;border-color:#fff #696969 #696969 #fff;box-shadow:inset -1px -1px 0 #a0a0a0"></div>
<svg style="position:absolute;left:1296px;top:354px" width="20" height="20" viewBox="0 0 20 20"><rect x="1.5" y="1.5" width="8.5" height="11.5" fill="#fff" stroke="#111" stroke-width="1.6"/><path d="M9.5 13 L15 13" stroke="#111" stroke-width="1.6"/><path d="M1 1.5 L7 4.5 L7 18.5 L1 13 Z" fill="#8c8a10" stroke="#1a1a1a" stroke-width="1.1"/><path d="M11.5 8 L15 4.5 L15 6.3 L18.5 6.3 L18.5 9.7 L15 9.7 L15 11.5 Z" fill="#1428a8"/></svg>
<div class="t" style="left:1318px;top:357px;font-size:17px;">退出<i class="h" style="width:8.5px">(</i><i class="h" style="width:8.5px"><u style="font-size:15px">X</u></i><i class="h" style="width:8.5px">)</i></div>
<div style="left:1289px;top:397px;width:97px;height:31px;background:#f0f0f0;border:1px solid;border-color:#fff #696969 #696969 #fff;box-shadow:inset -1px -1px 0 #a0a0a0"></div>
<div class="t" style="left:1289px;top:404px;font-size:17px;">特殊打印<i class="h" style="width:8.5px">(</i><i class="h" style="width:8.5px"><u style="font-size:15px">T</u></i><i class="h" style="width:8.5px">)</i></div>
<div style="left:541px;top:408px;width:153px;height:23px;background:#f0f0f0;border-left:1px solid #fff;border-top:1px solid #fff"></div>
<div style="left:693px;top:410px;width:1px;height:20px;background:#696969"></div>
<div class="t" style="left:547px;top:411px;font-size:17px;">病人账户信息<i class="h" style="width:8.5px">(</i><i class="h" style="width:8.5px"><u style="font-size:15px">Z</u></i><i class="h" style="width:8.5px">)</i></div>
<div style="left:695px;top:408px;width:155px;height:23px;background:#f0f0f0;border-top:1px solid #fff"></div>
<div style="left:849px;top:410px;width:1px;height:20px;background:#696969"></div>
<div class="t" style="left:701px;top:411px;font-size:17px;">病人交费信息<i class="h" style="width:8.5px">(</i><i class="h" style="width:8.5px"><u style="font-size:15px">G</u></i><i class="h" style="width:8.5px">)</i></div>
<div style="left:849px;top:404px;width:211px;height:27px;background:#f0f0f0;border-left:1px solid #fff;border-top:1px solid #fff"></div>
<div style="left:1058px;top:406px;width:1px;height:25px;background:#696969"></div>
<div class="t" style="left:857px;top:408px;font-size:17px;">病人未结算费用信息<i class="h" style="width:8.5px">(</i><i class="h" style="width:8.5px"><u style="font-size:15px">F</u></i><i class="h" style="width:8.5px">)</i></div>
<div style="left:1061px;top:408px;width:186px;height:23px;background:#f0f0f0;border-top:1px solid #fff"></div>
<div style="left:1245px;top:410px;width:1px;height:20px;background:#696969"></div>
<div class="t" style="left:1065px;top:411px;font-size:17px;">病人已结算的费用<i class="h" style="width:8.5px">(</i><i class="h" style="width:8.5px"><u style="font-size:15px">S</u></i><i class="h" style="width:8.5px">)</i></div>
<div style="left:538px;top:430px;width:851px;height:408px;border-left:1px solid #fff;border-top:1px solid #fff;border-right:2px solid #808080;border-bottom:2px solid #808080"></div>
<div style="left:849px;top:430px;width:210px;height:1px;background:#f0f0f0"></div>
<div style="left:543px;top:436px;width:845px;height:241px;background:#fff;border-left:2px solid #777;border-top:2px solid #777;border-right:1px solid #fff;border-bottom:1px solid #fff"></div>
<div style="left:545px;top:438px;width:14px;height:22px;background:#f0f0f0;box-shadow:inset 1px 1px 0 #fff,inset -1px -1px 0 #a0a0a0"></div>
<div style="left:559px;top:438px;width:1px;height:23px;background:#000"></div>
<div style="left:545px;top:460px;width:15px;height:1px;background:#000"></div>
<div style="left:560px;top:438px;width:75px;height:22px;background:#f0f0f0;box-shadow:inset 1px 1px 0 #fff,inset -1px -1px 0 #a0a0a0"></div>
<div style="left:635px;top:438px;width:1px;height:23px;background:#000"></div>
<div style="left:560px;top:460px;width:76px;height:1px;background:#000"></div>
<div style="left:560px;top:438px;width:75px;height:22px;overflow:hidden"><div class="t" style="left:1px;top:3px;font-size:18px">单据号</div></div>
<div style="left:636px;top:438px;width:82px;height:22px;background:#f0f0f0;box-shadow:inset 1px 1px 0 #fff,inset -1px -1px 0 #a0a0a0"></div>
<div style="left:718px;top:438px;width:1px;height:23px;background:#000"></div>
<div style="left:636px;top:460px;width:83px;height:1px;background:#000"></div>
<div style="left:636px;top:438px;width:82px;height:22px;overflow:hidden"><div class="t" style="left:1px;top:3px;font-size:18px">合计金额</div></div>
<div style="left:719px;top:438px;width:74px;height:22px;background:#f0f0f0;box-shadow:inset 1px 1px 0 #fff,inset -1px -1px 0 #a0a0a0"></div>
<div style="left:793px;top:438px;width:1px;height:23px;background:#000"></div>
<div style="left:719px;top:460px;width:75px;height:1px;background:#000"></div>
<div style="left:719px;top:438px;width:74px;height:22px;overflow:hidden"><div class="t" style="left:1px;top:3px;font-size:18px">现金支付</div></div>
<div style="left:794px;top:438px;width:77px;height:22px;background:#f0f0f0;box-shadow:inset 1px 1px 0 #fff,inset -1px -1px 0 #a0a0a0"></div>
<div style="left:871px;top:438px;width:1px;height:23px;background:#000"></div>
<div style="left:794px;top:460px;width:78px;height:1px;background:#000"></div>
<div style="left:794px;top:438px;width:77px;height:22px;overflow:hidden"><div class="t" style="left:1px;top:3px;font-size:18px">记账金额</div></div>
<div style="left:872px;top:438px;width:78px;height:22px;background:#f0f0f0;box-shadow:inset 1px 1px 0 #fff,inset -1px -1px 0 #a0a0a0"></div>
<div style="left:950px;top:438px;width:1px;height:23px;background:#000"></div>
<div style="left:872px;top:460px;width:79px;height:1px;background:#000"></div>
<div style="left:872px;top:438px;width:78px;height:22px;overflow:hidden"><div class="t" style="left:1px;top:3px;font-size:18px">其它支付</div></div>
<div style="left:951px;top:438px;width:89px;height:22px;background:#f0f0f0;box-shadow:inset 1px 1px 0 #fff,inset -1px -1px 0 #a0a0a0"></div>
<div style="left:1040px;top:438px;width:1px;height:23px;background:#000"></div>
<div style="left:951px;top:460px;width:90px;height:1px;background:#000"></div>
<div style="left:951px;top:438px;width:89px;height:22px;overflow:hidden"><div class="t" style="left:1px;top:3px;font-size:18px">病人余额</div></div>
<div style="left:1041px;top:438px;width:77px;height:22px;background:#f0f0f0;box-shadow:inset 1px 1px 0 #fff,inset -1px -1px 0 #a0a0a0"></div>
<div style="left:1118px;top:438px;width:1px;height:23px;background:#000"></div>
<div style="left:1041px;top:460px;width:78px;height:1px;background:#000"></div>
<div style="left:1041px;top:438px;width:77px;height:22px;overflow:hidden"><div class="t" style="left:1px;top:3px;font-size:18px">操作员</div></div>
<div style="left:1119px;top:438px;width:75px;height:22px;background:#f0f0f0;box-shadow:inset 1px 1px 0 #fff,inset -1px -1px 0 #a0a0a0"></div>
<div style="left:1194px;top:438px;width:1px;height:23px;background:#000"></div>
<div style="left:1119px;top:460px;width:76px;height:1px;background:#000"></div>
<div style="left:1119px;top:438px;width:75px;height:22px;overflow:hidden"><div class="t" style="left:1px;top:3px;font-size:18px">操作日期</div></div>
<div style="left:1195px;top:438px;width:75px;height:22px;background:#f0f0f0;box-shadow:inset 1px 1px 0 #fff,inset -1px -1px 0 #a0a0a0"></div>
<div style="left:1270px;top:438px;width:1px;height:23px;background:#000"></div>
<div style="left:1195px;top:460px;width:76px;height:1px;background:#000"></div>
<div style="left:1195px;top:438px;width:75px;height:22px;overflow:hidden"><div class="t" style="left:1px;top:3px;font-size:18px">操作时间</div></div>
<div style="left:1271px;top:438px;width:87px;height:22px;background:#f0f0f0;box-shadow:inset 1px 1px 0 #fff,inset -1px -1px 0 #a0a0a0"></div>
<div style="left:1358px;top:438px;width:1px;height:23px;background:#000"></div>
<div style="left:1271px;top:460px;width:88px;height:1px;background:#000"></div>
<div style="left:1271px;top:438px;width:87px;height:22px;overflow:hidden"><div class="t" style="left:1px;top:3px;font-size:18px">冲销单号</div></div>
<div style="left:545px;top:461px;width:14px;height:23px;background:#f0f0f0;box-shadow:inset 1px 1px 0 #fff,inset -1px -1px 0 #a0a0a0"></div>
<div style="left:559px;top:461px;width:1px;height:24px;background:#000"></div>
<div style="left:545px;top:484px;width:15px;height:1px;background:#000"></div>
<div style="left:560px;top:484px;width:799px;height:1px;background:#c8c8c8"></div>
<div style="left:635px;top:461px;width:1px;height:24px;background:#c8c8c8"></div>
<div style="left:718px;top:461px;width:1px;height:24px;background:#c8c8c8"></div>
<div style="left:793px;top:461px;width:1px;height:24px;background:#c8c8c8"></div>
<div style="left:871px;top:461px;width:1px;height:24px;background:#c8c8c8"></div>
<div style="left:950px;top:461px;width:1px;height:24px;background:#c8c8c8"></div>
<div style="left:1040px;top:461px;width:1px;height:24px;background:#c8c8c8"></div>
<div style="left:1118px;top:461px;width:1px;height:24px;background:#c8c8c8"></div>
<div style="left:1194px;top:461px;width:1px;height:24px;background:#c8c8c8"></div>
<div style="left:1270px;top:461px;width:1px;height:24px;background:#c8c8c8"></div>
<div style="left:1358px;top:461px;width:1px;height:24px;background:#c8c8c8"></div>
<div class="t m ga" style="left:562px;top:463px;"><i>3</i><i>4</i><i>9</i><i>6</i><i>4</i><i>2</i><i>6</i><i>1</i></div>
<div class="t m ga" style="right:1104px;top:463px;"><i>1</i><i>8</i><i>.</i><i>0</i><i>0</i></div>
<div class="t m ga" style="right:1029px;top:463px;"><i>1</i><i>8</i><i>.</i><i>0</i><i>0</i></div>
<div class="t m ga" style="right:951px;top:463px;"><i>0</i><i>.</i><i>0</i><i>0</i></div>
<div class="t m ga" style="right:872px;top:463px;"><i>0</i><i>.</i><i>0</i><i>0</i></div>
<div class="t m ga" style="right:782px;top:463px;"><i>4</i><i>.</i><i>6</i><i>8</i></div>
<div style="left:1041px;top:461px;width:77px;height:23px;overflow:hidden"><div class="t m ga" style="left:2px;top:3px"><i class="w">孙</i><i class="w">艳</i></div></div>
<div class="t m ga" style="left:1120px;top:463px;"><i>2</i><i>0</i><i>2</i><i>0</i><i>1</i><i>0</i><i>0</i><i>2</i></div>
<div class="t m ga" style="left:1197px;top:463px;"><i>1</i><i>4</i><i>:</i><i>3</i><i>2</i><i>:</i><i>5</i><i>9</i></div>
<div style="left:1344px;top:461px;width:14px;height:23px;overflow:hidden"><div class="t m ga" style="left:8px;top:3px"><i>0</i></div></div>
<div style="left:545px;top:485px;width:14px;height:23px;background:#f0f0f0;box-shadow:inset 1px 1px 0 #fff,inset -1px -1px 0 #a0a0a0"></div>
<div style="left:559px;top:485px;width:1px;height:24px;background:#000"></div>
<div style="left:545px;top:508px;width:15px;height:1px;background:#000"></div>
<div style="left:560px;top:508px;width:799px;height:1px;background:#c8c8c8"></div>
<div style="left:635px;top:485px;width:1px;height:24px;background:#c8c8c8"></div>
<div style="left:718px;top:485px;width:1px;height:24px;background:#c8c8c8"></div>
<div style="left:793px;top:485px;width:1px;height:24px;background:#c8c8c8"></div>
<div style="left:871px;top:485px;width:1px;height:24px;background:#c8c8c8"></div>
<div style="left:950px;top:485px;width:1px;height:24px;background:#c8c8c8"></div>
<div style="left:1040px;top:485px;width:1px;height:24px;background:#c8c8c8"></div>
<div style="left:1118px;top:485px;width:1px;height:24px;background:#c8c8c8"></div>
<div style="left:1194px;top:485px;width:1px;height:24px;background:#c8c8c8"></div>
<div style="left:1270px;top:485px;width:1px;height:24px;background:#c8c8c8"></div>
<div style="left:1358px;top:485px;width:1px;height:24px;background:#c8c8c8"></div>
<div class="t m ga" style="left:562px;top:487px;"><i>3</i><i>4</i><i>9</i><i>6</i><i>4</i><i>2</i><i>6</i><i>0</i></div>
<div class="t m ga" style="right:1104px;top:487px;"><i>8</i><i>.</i><i>5</i><i>0</i></div>
<div class="t m ga" style="right:1029px;top:487px;"><i>8</i><i>.</i><i>5</i><i>0</i></div>
<div class="t m ga" style="right:951px;top:487px;"><i>0</i><i>.</i><i>0</i><i>0</i></div>
<div class="t m ga" style="right:872px;top:487px;"><i>0</i><i>.</i><i>0</i><i>0</i></div>
<div class="t m ga" style="right:782px;top:487px;"><i>2</i><i>2</i><i>.</i><i>6</i><i>8</i></div>
<div style="left:1041px;top:485px;width:77px;height:23px;overflow:hidden"><div class="t m ga" style="left:2px;top:3px"><i class="w">孙</i><i class="w">艳</i></div></div>
<div class="t m ga" style="left:1120px;top:487px;"><i>2</i><i>0</i><i>2</i><i>0</i><i>1</i><i>0</i><i>0</i><i>2</i></div>
<div class="t m ga" style="left:1197px;top:487px;"><i>1</i><i>4</i><i>:</i><i>3</i><i>2</i><i>:</i><i>5</i><i>9</i></div>
<div style="left:1344px;top:485px;width:14px;height:23px;overflow:hidden"><div class="t m ga" style="left:8px;top:3px"><i>0</i></div></div>
<div style="left:545px;top:509px;width:14px;height:22px;background:#f0f0f0;box-shadow:inset 1px 1px 0 #fff,inset -1px -1px 0 #a0a0a0"></div>
<div style="left:559px;top:509px;width:1px;height:23px;background:#000"></div>
<div style="left:545px;top:531px;width:15px;height:1px;background:#000"></div>
<div style="left:560px;top:531px;width:799px;height:1px;background:#c8c8c8"></div>
<div style="left:635px;top:509px;width:1px;height:23px;background:#c8c8c8"></div>
<div style="left:718px;top:509px;width:1px;height:23px;background:#c8c8c8"></div>
<div style="left:793px;top:509px;width:1px;height:23px;background:#c8c8c8"></div>
<div style="left:871px;top:509px;width:1px;height:23px;background:#c8c8c8"></div>
<div style="left:950px;top:509px;width:1px;height:23px;background:#c8c8c8"></div>
<div style="left:1040px;top:509px;width:1px;height:23px;background:#c8c8c8"></div>
<div style="left:1118px;top:509px;width:1px;height:23px;background:#c8c8c8"></div>
<div style="left:1194px;top:509px;width:1px;height:23px;background:#c8c8c8"></div>
<div style="left:1270px;top:509px;width:1px;height:23px;background:#c8c8c8"></div>
<div style="left:1358px;top:509px;width:1px;height:23px;background:#c8c8c8"></div>
<div class="t m ga" style="left:562px;top:511px;"><i>3</i><i>4</i><i>9</i><i>6</i><i>4</i><i>2</i><i>5</i><i>9</i></div>
<div class="t m ga" style="right:1104px;top:511px;"><i>2</i><i>.</i><i>0</i><i>0</i></div>
<div class="t m ga" style="right:1029px;top:511px;"><i>2</i><i>.</i><i>0</i><i>0</i></div>
<div class="t m ga" style="right:951px;top:511px;"><i>0</i><i>.</i><i>0</i><i>0</i></div>
<div class="t m ga" style="right:872px;top:511px;"><i>0</i><i>.</i><i>0</i><i>0</i></div>
<div class="t m ga" style="right:782px;top:511px;"><i>3</i><i>1</i><i>.</i><i>1</i><i>8</i></div>
<div style="left:1041px;top:509px;width:77px;height:22px;overflow:hidden"><div class="t m ga" style="left:2px;top:3px"><i class="w">孙</i><i class="w">艳</i></div></div>
<div class="t m ga" style="left:1120px;top:511px;"><i>2</i><i>0</i><i>2</i><i>0</i><i>1</i><i>0</i><i>0</i><i>2</i></div>
<div class="t m ga" style="left:1197px;top:511px;"><i>1</i><i>4</i><i>:</i><i>3</i><i>2</i><i>:</i><i>5</i><i>9</i></div>
<div style="left:1344px;top:509px;width:14px;height:22px;overflow:hidden"><div class="t m ga" style="left:8px;top:3px"><i>0</i></div></div>
<div style="left:545px;top:532px;width:14px;height:23px;background:#f0f0f0;box-shadow:inset 1px 1px 0 #fff,inset -1px -1px 0 #a0a0a0"></div>
<div style="left:559px;top:532px;width:1px;height:24px;background:#000"></div>
<div style="left:545px;top:555px;width:15px;height:1px;background:#000"></div>
<div style="left:549px;top:536px;width:0;height:0;border-top:7px solid transparent;border-bottom:7px solid transparent;border-left:8px solid #000"></div>
<div style="left:560px;top:555px;width:799px;height:1px;background:#c8c8c8"></div>
<div style="left:635px;top:532px;width:1px;height:24px;background:#c8c8c8"></div>
<div style="left:718px;top:532px;width:1px;height:24px;background:#c8c8c8"></div>
<div style="left:793px;top:532px;width:1px;height:24px;background:#c8c8c8"></div>
<div style="left:871px;top:532px;width:1px;height:24px;background:#c8c8c8"></div>
<div style="left:950px;top:532px;width:1px;height:24px;background:#c8c8c8"></div>
<div style="left:1040px;top:532px;width:1px;height:24px;background:#c8c8c8"></div>
<div style="left:1118px;top:532px;width:1px;height:24px;background:#c8c8c8"></div>
<div style="left:1194px;top:532px;width:1px;height:24px;background:#c8c8c8"></div>
<div style="left:1270px;top:532px;width:1px;height:24px;background:#c8c8c8"></div>
<div style="left:1358px;top:532px;width:1px;height:24px;background:#c8c8c8"></div>
<div style="left:1195px;top:532px;width:75px;height:24px;background:#0078d7;outline:1px dotted #f0a030;outline-offset:-1px"></div>
<div class="t m ga" style="left:562px;top:534px;"><i>3</i><i>4</i><i>9</i><i>6</i><i>4</i><i>2</i><i>5</i><i>8</i></div>
<div class="t m ga" style="right:1104px;top:534px;"><i>2</i><i>.</i><i>0</i><i>0</i></div>
<div class="t m ga" style="right:1029px;top:534px;"><i>2</i><i>.</i><i>0</i><i>0</i></div>
<div class="t m ga" style="right:951px;top:534px;"><i>0</i><i>.</i><i>0</i><i>0</i></div>
<div class="t m ga" style="right:872px;top:534px;"><i>0</i><i>.</i><i>0</i><i>0</i></div>
<div class="t m ga" style="right:782px;top:534px;"><i>3</i><i>3</i><i>.</i><i>1</i><i>8</i></div>
<div style="left:1041px;top:532px;width:77px;height:23px;overflow:hidden"><div class="t m ga" style="left:2px;top:3px"><i class="w">孙</i><i class="w">艳</i></div></div>
<div class="t m ga" style="left:1120px;top:534px;"><i>2</i><i>0</i><i>2</i><i>0</i><i>1</i><i>0</i><i>0</i><i>2</i></div>
<div class="t m ga" style="left:1197px;top:534px;color:#fff;"><i>1</i><i>4</i><i>:</i><i>3</i><i>2</i><i>:</i><i>5</i><i>8</i></div>
<div style="left:1344px;top:532px;width:14px;height:23px;overflow:hidden"><div class="t m ga" style="left:8px;top:3px"><i>0</i></div></div>
<div style="left:545px;top:556px;width:14px;height:23px;background:#f0f0f0;box-shadow:inset 1px 1px 0 #fff,inset -1px -1px 0 #a0a0a0"></div>
<div style="left:559px;top:556px;width:1px;height:24px;background:#000"></div>
<div style="left:545px;top:579px;width:15px;height:1px;background:#000"></div>
<div style="left:560px;top:579px;width:799px;height:1px;background:#c8c8c8"></div>
<div style="left:635px;top:556px;width:1px;height:24px;background:#c8c8c8"></div>
<div style="left:718px;top:556px;width:1px;height:24px;background:#c8c8c8"></div>
<div style="left:793px;top:556px;width:1px;height:24px;background:#c8c8c8"></div>
<div style="left:871px;top:556px;width:1px;height:24px;background:#c8c8c8"></div>
<div style="left:950px;top:556px;width:1px;height:24px;background:#c8c8c8"></div>
<div style="left:1040px;top:556px;width:1px;height:24px;background:#c8c8c8"></div>
<div style="left:1118px;top:556px;width:1px;height:24px;background:#c8c8c8"></div>
<div style="left:1194px;top:556px;width:1px;height:24px;background:#c8c8c8"></div>
<div style="left:1270px;top:556px;width:1px;height:24px;background:#c8c8c8"></div>
<div style="left:1358px;top:556px;width:1px;height:24px;background:#c8c8c8"></div>
<div class="t m ga" style="left:562px;top:558px;"><i>3</i><i>4</i><i>9</i><i>6</i><i>4</i><i>2</i><i>5</i><i>7</i></div>
<div class="t m ga" style="right:1104px;top:558px;"><i>0</i><i>.</i><i>2</i><i>9</i></div>
<div class="t m ga" style="right:1029px;top:558px;"><i>0</i><i>.</i><i>2</i><i>9</i></div>
<div class="t m ga" style="right:951px;top:558px;"><i>0</i><i>.</i><i>0</i><i>0</i></div>
<div class="t m ga" style="right:872px;top:558px;"><i>0</i><i>.</i><i>0</i><i>0</i></div>
<div class="t m ga" style="right:782px;top:558px;"><i>3</i><i>5</i><i>.</i><i>1</i><i>8</i></div>
<div style="left:1041px;top:556px;width:77px;height:23px;overflow:hidden"><div class="t m ga" style="left:2px;top:3px"><i class="w">孙</i><i class="w">艳</i></div></div>
<div class="t m ga" style="left:1120px;top:558px;"><i>2</i><i>0</i><i>2</i><i>0</i><i>1</i><i>0</i><i>0</i><i>2</i></div>
<div class="t m ga" style="left:1197px;top:558px;"><i>1</i><i>4</i><i>:</i><i>3</i><i>2</i><i>:</i><i>5</i><i>8</i></div>
<div style="left:1344px;top:556px;width:14px;height:23px;overflow:hidden"><div class="t m ga" style="left:8px;top:3px"><i>0</i></div></div>
<div style="left:545px;top:580px;width:14px;height:23px;background:#f0f0f0;box-shadow:inset 1px 1px 0 #fff,inset -1px -1px 0 #a0a0a0"></div>
<div style="left:559px;top:580px;width:1px;height:24px;background:#000"></div>
<div style="left:545px;top:603px;width:15px;height:1px;background:#000"></div>
<div style="left:560px;top:603px;width:799px;height:1px;background:#c8c8c8"></div>
<div style="left:635px;top:580px;width:1px;height:24px;background:#c8c8c8"></div>
<div style="left:718px;top:580px;width:1px;height:24px;background:#c8c8c8"></div>
<div style="left:793px;top:580px;width:1px;height:24px;background:#c8c8c8"></div>
<div style="left:871px;top:580px;width:1px;height:24px;background:#c8c8c8"></div>
<div style="left:950px;top:580px;width:1px;height:24px;background:#c8c8c8"></div>
<div style="left:1040px;top:580px;width:1px;height:24px;background:#c8c8c8"></div>
<div style="left:1118px;top:580px;width:1px;height:24px;background:#c8c8c8"></div>
<div style="left:1194px;top:580px;width:1px;height:24px;background:#c8c8c8"></div>
<div style="left:1270px;top:580px;width:1px;height:24px;background:#c8c8c8"></div>
<div style="left:1358px;top:580px;width:1px;height:24px;background:#c8c8c8"></div>
<div class="t m ga" style="left:562px;top:582px;"><i>3</i><i>4</i><i>9</i><i>6</i><i>4</i><i>2</i><i>5</i><i>6</i></div>
<div class="t m ga" style="right:1104px;top:582px;"><i>0</i><i>.</i><i>2</i><i>9</i></div>
<div class="t m ga" style="right:1029px;top:582px;"><i>0</i><i>.</i><i>2</i><i>9</i></div>
<div class="t m ga" style="right:951px;top:582px;"><i>0</i><i>.</i><i>0</i><i>0</i></div>
<div class="t m ga" style="right:872px;top:582px;"><i>0</i><i>.</i><i>0</i><i>0</i></div>
<div class="t m ga" style="right:782px;top:582px;"><i>3</i><i>5</i><i>.</i><i>4</i><i>7</i></div>
<div style="left:1041px;top:580px;width:77px;height:23px;overflow:hidden"><div class="t m ga" style="left:2px;top:3px"><i class="w">孙</i><i class="w">艳</i></div></div>
<div class="t m ga" style="left:1120px;top:582px;"><i>2</i><i>0</i><i>2</i><i>0</i><i>1</i><i>0</i><i>0</i><i>2</i></div>
<div class="t m ga" style="left:1197px;top:582px;"><i>1</i><i>4</i><i>:</i><i>3</i><i>2</i><i>:</i><i>5</i><i>8</i></div>
<div style="left:1344px;top:580px;width:14px;height:23px;overflow:hidden"><div class="t m ga" style="left:8px;top:3px"><i>0</i></div></div>
<div style="left:545px;top:604px;width:14px;height:23px;background:#f0f0f0;box-shadow:inset 1px 1px 0 #fff,inset -1px -1px 0 #a0a0a0"></div>
<div style="left:559px;top:604px;width:1px;height:24px;background:#000"></div>
<div style="left:545px;top:627px;width:15px;height:1px;background:#000"></div>
<div style="left:560px;top:627px;width:799px;height:1px;background:#c8c8c8"></div>
<div style="left:635px;top:604px;width:1px;height:24px;background:#c8c8c8"></div>
<div style="left:718px;top:604px;width:1px;height:24px;background:#c8c8c8"></div>
<div style="left:793px;top:604px;width:1px;height:24px;background:#c8c8c8"></div>
<div style="left:871px;top:604px;width:1px;height:24px;background:#c8c8c8"></div>
<div style="left:950px;top:604px;width:1px;height:24px;background:#c8c8c8"></div>
<div style="left:1040px;top:604px;width:1px;height:24px;background:#c8c8c8"></div>
<div style="left:1118px;top:604px;width:1px;height:24px;background:#c8c8c8"></div>
<div style="left:1194px;top:604px;width:1px;height:24px;background:#c8c8c8"></div>
<div style="left:1270px;top:604px;width:1px;height:24px;background:#c8c8c8"></div>
<div style="left:1358px;top:604px;width:1px;height:24px;background:#c8c8c8"></div>
<div class="t m ga" style="left:562px;top:606px;"><i>3</i><i>4</i><i>9</i><i>6</i><i>4</i><i>2</i><i>4</i><i>3</i></div>
<div class="t m ga" style="right:1104px;top:606px;"><i>3</i><i>0</i><i>.</i><i>2</i><i>4</i></div>
<div class="t m ga" style="right:1029px;top:606px;"><i>3</i><i>0</i><i>.</i><i>2</i><i>4</i></div>
<div class="t m ga" style="right:951px;top:606px;"><i>0</i><i>.</i><i>0</i><i>0</i></div>
<div class="t m ga" style="right:872px;top:606px;"><i>0</i><i>.</i><i>0</i><i>0</i></div>
<div class="t m ga" style="right:782px;top:606px;"><i>3</i><i>5</i><i>.</i><i>7</i><i>6</i></div>
<div style="left:1041px;top:604px;width:77px;height:23px;overflow:hidden"><div class="t m ga" style="left:2px;top:3px"><i class="w">自</i><i class="w">助</i><i class="w">机</i><i>2</i><i>0</i></div></div>
<div class="t m ga" style="left:1120px;top:606px;"><i>2</i><i>0</i><i>2</i><i>0</i><i>1</i><i>0</i><i>0</i><i>2</i></div>
<div class="t m ga" style="left:1197px;top:606px;"><i>1</i><i>4</i><i>:</i><i>3</i><i>0</i><i>:</i><i>0</i><i>3</i></div>
<div style="left:1344px;top:604px;width:14px;height:23px;overflow:hidden"><div class="t m ga" style="left:8px;top:3px"><i>0</i></div></div>
<div style="left:545px;top:626px;width:14px;height:1px;background:#000"></div>
<div style="left:560px;top:626px;width:799px;height:1px;background:#a0a0a0"></div>
<div style="left:545px;top:629px;width:814px;height:1px;background:#c8c8c8"></div>
<div style="left:545px;top:630px;width:14px;height:24px;background:#f0f0f0;box-shadow:inset 1px 1px 0 #fff,inset -1px -1px 0 #a0a0a0"></div>
<div style="left:559px;top:630px;width:1px;height:25px;background:#000"></div>
<div style="left:545px;top:654px;width:15px;height:1px;background:#000"></div>
<div style="left:635px;top:630px;width:1px;height:24px;background:#c8c8c8"></div>
<div style="left:718px;top:630px;width:1px;height:24px;background:#c8c8c8"></div>
<div style="left:793px;top:630px;width:1px;height:24px;background:#c8c8c8"></div>
<div style="left:871px;top:630px;width:1px;height:24px;background:#c8c8c8"></div>
<div style="left:950px;top:630px;width:1px;height:24px;background:#c8c8c8"></div>
<div style="left:1040px;top:630px;width:1px;height:24px;background:#c8c8c8"></div>
<div style="left:1118px;top:630px;width:1px;height:24px;background:#c8c8c8"></div>
<div style="left:1194px;top:630px;width:1px;height:24px;background:#c8c8c8"></div>
<div style="left:1270px;top:630px;width:1px;height:24px;background:#c8c8c8"></div>
<div style="left:1358px;top:630px;width:1px;height:24px;background:#c8c8c8"></div>
<div style="left:560px;top:654px;width:799px;height:1px;background:#c8c8c8"></div>
<div class="t m ga" style="right:1104px;top:635px;"><i>9</i><i>4</i><i>.</i><i>8</i><i>2</i></div>
<div class="t m ga" style="right:1029px;top:635px;"><i>9</i><i>4</i><i>.</i><i>8</i><i>2</i></div>
<div class="t m ga" style="right:951px;top:635px;"><i>0</i><i>.</i><i>0</i><i>0</i></div>
<div class="t m ga" style="right:872px;top:635px;"><i>0</i><i>.</i><i>0</i><i>0</i></div>
<div style="left:1359px;top:438px;width:22px;height:217px;background:#f0f0f0"></div>
<svg style="position:absolute;left:1364px;top:445px" width="12" height="9" viewBox="0 0 12 9"><path d="M1 7 L6 2 L11 7" stroke="#585858" stroke-width="2.7" fill="none"/></svg>
<div style="left:1361px;top:537px;width:19px;height:21px;background:#cdcdcd"></div>
<svg style="position:absolute;left:1364px;top:640px" width="12" height="9" viewBox="0 0 12 9"><path d="M1 2 L6 7 L11 2" stroke="#585858" stroke-width="2.7" fill="none"/></svg>
<div style="left:545px;top:655px;width:836px;height:21px;background:#f0f0f0"></div>
<svg style="position:absolute;left:551px;top:659px" width="9" height="12" viewBox="0 0 9 12"><path d="M7 1 L2 6 L7 11" stroke="#585858" stroke-width="2.7" fill="none"/></svg>
<div style="left:814px;top:657px;width:21px;height:18px;background:#cdcdcd"></div>
<svg style="position:absolute;left:1344px;top:659px" width="9" height="12" viewBox="0 0 9 12"><path d="M2 1 L7 6 L2 11" stroke="#585858" stroke-width="2.7" fill="none"/></svg>
<div style="left:543px;top:684px;width:845px;height:148px;background:#fff;border-left:2px solid #777;border-top:2px solid #777;border-right:1px solid #fff;border-bottom:1px solid #fff"></div>
<div style="left:545px;top:686px;width:14px;height:23px;background:#f0f0f0;box-shadow:inset 1px 1px 0 #fff,inset -1px -1px 0 #a0a0a0"></div>
<div style="left:559px;top:686px;width:1px;height:24px;background:#000"></div>
<div style="left:545px;top:709px;width:15px;height:1px;background:#000"></div>
<div style="left:560px;top:686px;width:65px;height:23px;background:#f0f0f0;box-shadow:inset 1px 1px 0 #fff,inset -1px -1px 0 #a0a0a0"></div>
<div style="left:625px;top:686px;width:1px;height:24px;background:#000"></div>
<div style="left:560px;top:709px;width:66px;height:1px;background:#000"></div>
<div style="left:560px;top:686px;width:65px;height:23px;overflow:hidden"><div class="t" style="left:1px;top:3px;font-size:18px">单据号</div></div>
<div style="left:626px;top:686px;width:158px;height:23px;background:#f0f0f0;box-shadow:inset 1px 1px 0 #fff,inset -1px -1px 0 #a0a0a0"></div>
<div style="left:784px;top:686px;width:1px;height:24px;background:#000"></div>
<div style="left:626px;top:709px;width:159px;height:1px;background:#000"></div>
<div style="left:626px;top:686px;width:158px;height:23px;overflow:hidden"><div class="t" style="left:1px;top:3px;font-size:18px">名称</div></div>
<div style="left:785px;top:686px;width:53px;height:23px;background:#f0f0f0;box-shadow:inset 1px 1px 0 #fff,inset -1px -1px 0 #a0a0a0"></div>
<div style="left:838px;top:686px;width:1px;height:24px;background:#000"></div>
<div style="left:785px;top:709px;width:54px;height:1px;background:#000"></div>
<div style="left:785px;top:686px;width:53px;height:23px;overflow:hidden"><div class="t" style="left:1px;top:3px;font-size:18px">规格</div></div>
<div style="left:839px;top:686px;width:45px;height:23px;background:#f0f0f0;box-shadow:inset 1px 1px 0 #fff,inset -1px -1px 0 #a0a0a0"></div>
<div style="left:884px;top:686px;width:1px;height:24px;background:#000"></div>
<div style="left:839px;top:709px;width:46px;height:1px;background:#000"></div>
<div style="left:839px;top:686px;width:45px;height:23px;overflow:hidden"><div class="t" style="left:1px;top:3px;font-size:18px">单位</div></div>
<div style="left:885px;top:686px;width:48px;height:23px;background:#f0f0f0;box-shadow:inset 1px 1px 0 #fff,inset -1px -1px 0 #a0a0a0"></div>
<div style="left:933px;top:686px;width:1px;height:24px;background:#000"></div>
<div style="left:885px;top:709px;width:49px;height:1px;background:#000"></div>
<div style="left:885px;top:686px;width:48px;height:23px;overflow:hidden"><div class="t" style="left:1px;top:3px;font-size:18px">单价</div></div>
<div style="left:934px;top:686px;width:47px;height:23px;background:#f0f0f0;box-shadow:inset 1px 1px 0 #fff,inset -1px -1px 0 #a0a0a0"></div>
<div style="left:981px;top:686px;width:1px;height:24px;background:#000"></div>
<div style="left:934px;top:709px;width:48px;height:1px;background:#000"></div>
<div style="left:934px;top:686px;width:47px;height:23px;overflow:hidden"><div class="t" style="left:1px;top:3px;font-size:18px">数量</div></div>
<div style="left:982px;top:686px;width:79px;height:23px;background:#f0f0f0;box-shadow:inset 1px 1px 0 #fff,inset -1px -1px 0 #a0a0a0"></div>
<div style="left:1061px;top:686px;width:1px;height:24px;background:#000"></div>
<div style="left:982px;top:709px;width:80px;height:1px;background:#000"></div>
<div style="left:982px;top:686px;width:79px;height:23px;overflow:hidden"><div class="t" style="left:1px;top:3px;font-size:18px">合计金额</div></div>
<div style="left:1062px;top:686px;width:72px;height:23px;background:#f0f0f0;box-shadow:inset 1px 1px 0 #fff,inset -1px -1px 0 #a0a0a0"></div>
<div style="left:1134px;top:686px;width:1px;height:24px;background:#000"></div>
<div style="left:1062px;top:709px;width:73px;height:1px;background:#000"></div>
<div style="left:1062px;top:686px;width:72px;height:23px;overflow:hidden"><div class="t" style="left:1px;top:3px;font-size:18px">现金支付</div></div>
<div style="left:1135px;top:686px;width:77px;height:23px;background:#f0f0f0;box-shadow:inset 1px 1px 0 #fff,inset -1px -1px 0 #a0a0a0"></div>
<div style="left:1212px;top:686px;width:1px;height:24px;background:#000"></div>
<div style="left:1135px;top:709px;width:78px;height:1px;background:#000"></div>
<div style="left:1135px;top:686px;width:77px;height:23px;overflow:hidden"><div class="t" style="left:1px;top:3px;font-size:18px">记账金额</div></div>
<div style="left:1213px;top:686px;width:83px;height:23px;background:#f0f0f0;box-shadow:inset 1px 1px 0 #fff,inset -1px -1px 0 #a0a0a0"></div>
<div style="left:1296px;top:686px;width:1px;height:24px;background:#000"></div>
<div style="left:1213px;top:709px;width:84px;height:1px;background:#000"></div>
<div style="left:1213px;top:686px;width:83px;height:23px;overflow:hidden"><div class="t" style="left:1px;top:3px;font-size:18px">其它支付</div></div>
<div style="left:1297px;top:686px;width:61px;height:23px;background:#f0f0f0;box-shadow:inset 1px 1px 0 #fff,inset -1px -1px 0 #a0a0a0"></div>
<div style="left:1358px;top:686px;width:1px;height:24px;background:#000"></div>
<div style="left:1297px;top:709px;width:62px;height:1px;background:#000"></div>
<div style="left:1297px;top:686px;width:61px;height:23px;overflow:hidden"><div class="t" style="left:1px;top:3px;font-size:18px">减免金额</div></div>
<div style="left:545px;top:710px;width:14px;height:23px;background:#f0f0f0;box-shadow:inset 1px 1px 0 #fff,inset -1px -1px 0 #a0a0a0"></div>
<div style="left:559px;top:710px;width:1px;height:24px;background:#000"></div>
<div style="left:545px;top:733px;width:15px;height:1px;background:#000"></div>
<div style="left:549px;top:714px;width:0;height:0;border-top:7px solid transparent;border-bottom:7px solid transparent;border-left:8px solid #000"></div>
<div style="left:560px;top:733px;width:799px;height:1px;background:#c8c8c8"></div>
<div style="left:625px;top:710px;width:1px;height:23px;background:#c8c8c8"></div>
<div style="left:784px;top:710px;width:1px;height:23px;background:#c8c8c8"></div>
<div style="left:838px;top:710px;width:1px;height:23px;background:#c8c8c8"></div>
<div style="left:884px;top:710px;width:1px;height:23px;background:#c8c8c8"></div>
<div style="left:933px;top:710px;width:1px;height:23px;background:#c8c8c8"></div>
<div style="left:981px;top:710px;width:1px;height:23px;background:#c8c8c8"></div>
<div style="left:1061px;top:710px;width:1px;height:23px;background:#c8c8c8"></div>
<div style="left:1134px;top:710px;width:1px;height:23px;background:#c8c8c8"></div>
<div style="left:1212px;top:710px;width:1px;height:23px;background:#c8c8c8"></div>
<div style="left:1296px;top:710px;width:1px;height:23px;background:#c8c8c8"></div>
<div style="left:1358px;top:710px;width:1px;height:23px;background:#c8c8c8"></div>
<div class="t m ga" style="left:561px;top:712px;"><i>4</i><i>9</i><i>6</i><i>4</i><i>2</i><i>5</i><i>8</i></div>
<div class="t" style="left:628px;top:713px;font-size:18px;">肌肉注射</div>
<div class="t" style="left:787px;top:713px;font-size:18px;">次</div>
<div class="t" style="left:841px;top:713px;font-size:18px;">次</div>
<div class="t m ga" style="right:888px;top:712px;"><i>2</i></div>
<div class="t m ga" style="right:840px;top:712px;"><i>1</i></div>
<div class="t m ga" style="right:760px;top:712px;"><i>2</i><i>.</i><i>0</i><i>0</i></div>
<div class="t m ga" style="right:687px;top:712px;"><i>2</i><i>.</i><i>0</i><i>0</i></div>
<div class="t m ga" style="right:609px;top:712px;"><i>0</i><i>.</i><i>0</i><i>0</i></div>
<div class="t m ga" style="right:525px;top:712px;"><i>0</i><i>.</i><i>0</i><i>0</i></div>
<div style="left:1359px;top:686px;width:22px;height:145px;background:#f0f0f0"></div>
<svg style="position:absolute;left:1364px;top:693px" width="12" height="9" viewBox="0 0 12 9"><path d="M1 7 L6 2 L11 7" stroke="#585858" stroke-width="2.7" fill="none"/></svg>
<div style="left:1361px;top:708px;width:19px;height:20px;background:#cdcdcd"></div>
<svg style="position:absolute;left:1364px;top:794px" width="12" height="9" viewBox="0 0 12 9"><path d="M1 2 L6 7 L11 2" stroke="#585858" stroke-width="2.7" fill="none"/></svg>
<div style="left:545px;top:810px;width:836px;height:21px;background:#f0f0f0"></div>
<svg style="position:absolute;left:551px;top:814px" width="9" height="12" viewBox="0 0 9 12"><path d="M7 1 L2 6 L7 11" stroke="#585858" stroke-width="2.7" fill="none"/></svg>
<div style="left:566px;top:811px;width:21px;height:18px;background:#cdcdcd"></div>
<svg style="position:absolute;left:1344px;top:814px" width="9" height="12" viewBox="0 0 9 12"><path d="M2 1 L7 6 L2 11" stroke="#585858" stroke-width="2.7" fill="none"/></svg>
<svg style="position:absolute;left:1726px;top:790px" width="70" height="70" viewBox="0 0 70 70"><defs><radialGradient id="ng" cx="0.5" cy="0.45" r="0.55"><stop offset="0" stop-color="#f4f6f8"/><stop offset="1" stop-color="#d2ead8"/></radialGradient></defs><circle cx="35" cy="34.5" r="31" fill="url(#ng)"/><circle cx="35" cy="34.5" r="30.5" fill="none" stroke="#2ed05a" stroke-width="4.5" stroke-dasharray="137.9 53.7" transform="rotate(-90 35 34.5)"/><circle cx="35" cy="34.5" r="30.5" fill="none" stroke="#7d929a" stroke-width="3.5" stroke-dasharray="0 137.9 53.7 0" transform="rotate(-90 35 34.5)"/><circle cx="35" cy="34.5" r="27.5" fill="none" stroke="#3bd468" stroke-width="1"/><text x="17" y="36" font-family="Liberation Sans,sans-serif" font-size="22" fill="#3a3a3a" letter-spacing="-0.5">72</text><text x="41.5" y="36" font-family="Liberation Sans,sans-serif" font-size="13" fill="#3a3a3a">%</text><path d="M20 46 L20 53 M17.5 48.5 L20 45.5 L22.5 48.5" stroke="#1e8cf0" stroke-width="1.4" fill="none"/><text x="25.5" y="52.5" font-family="Liberation Sans,sans-serif" font-size="10" fill="#333">2.3K/s</text></svg></body></html>
